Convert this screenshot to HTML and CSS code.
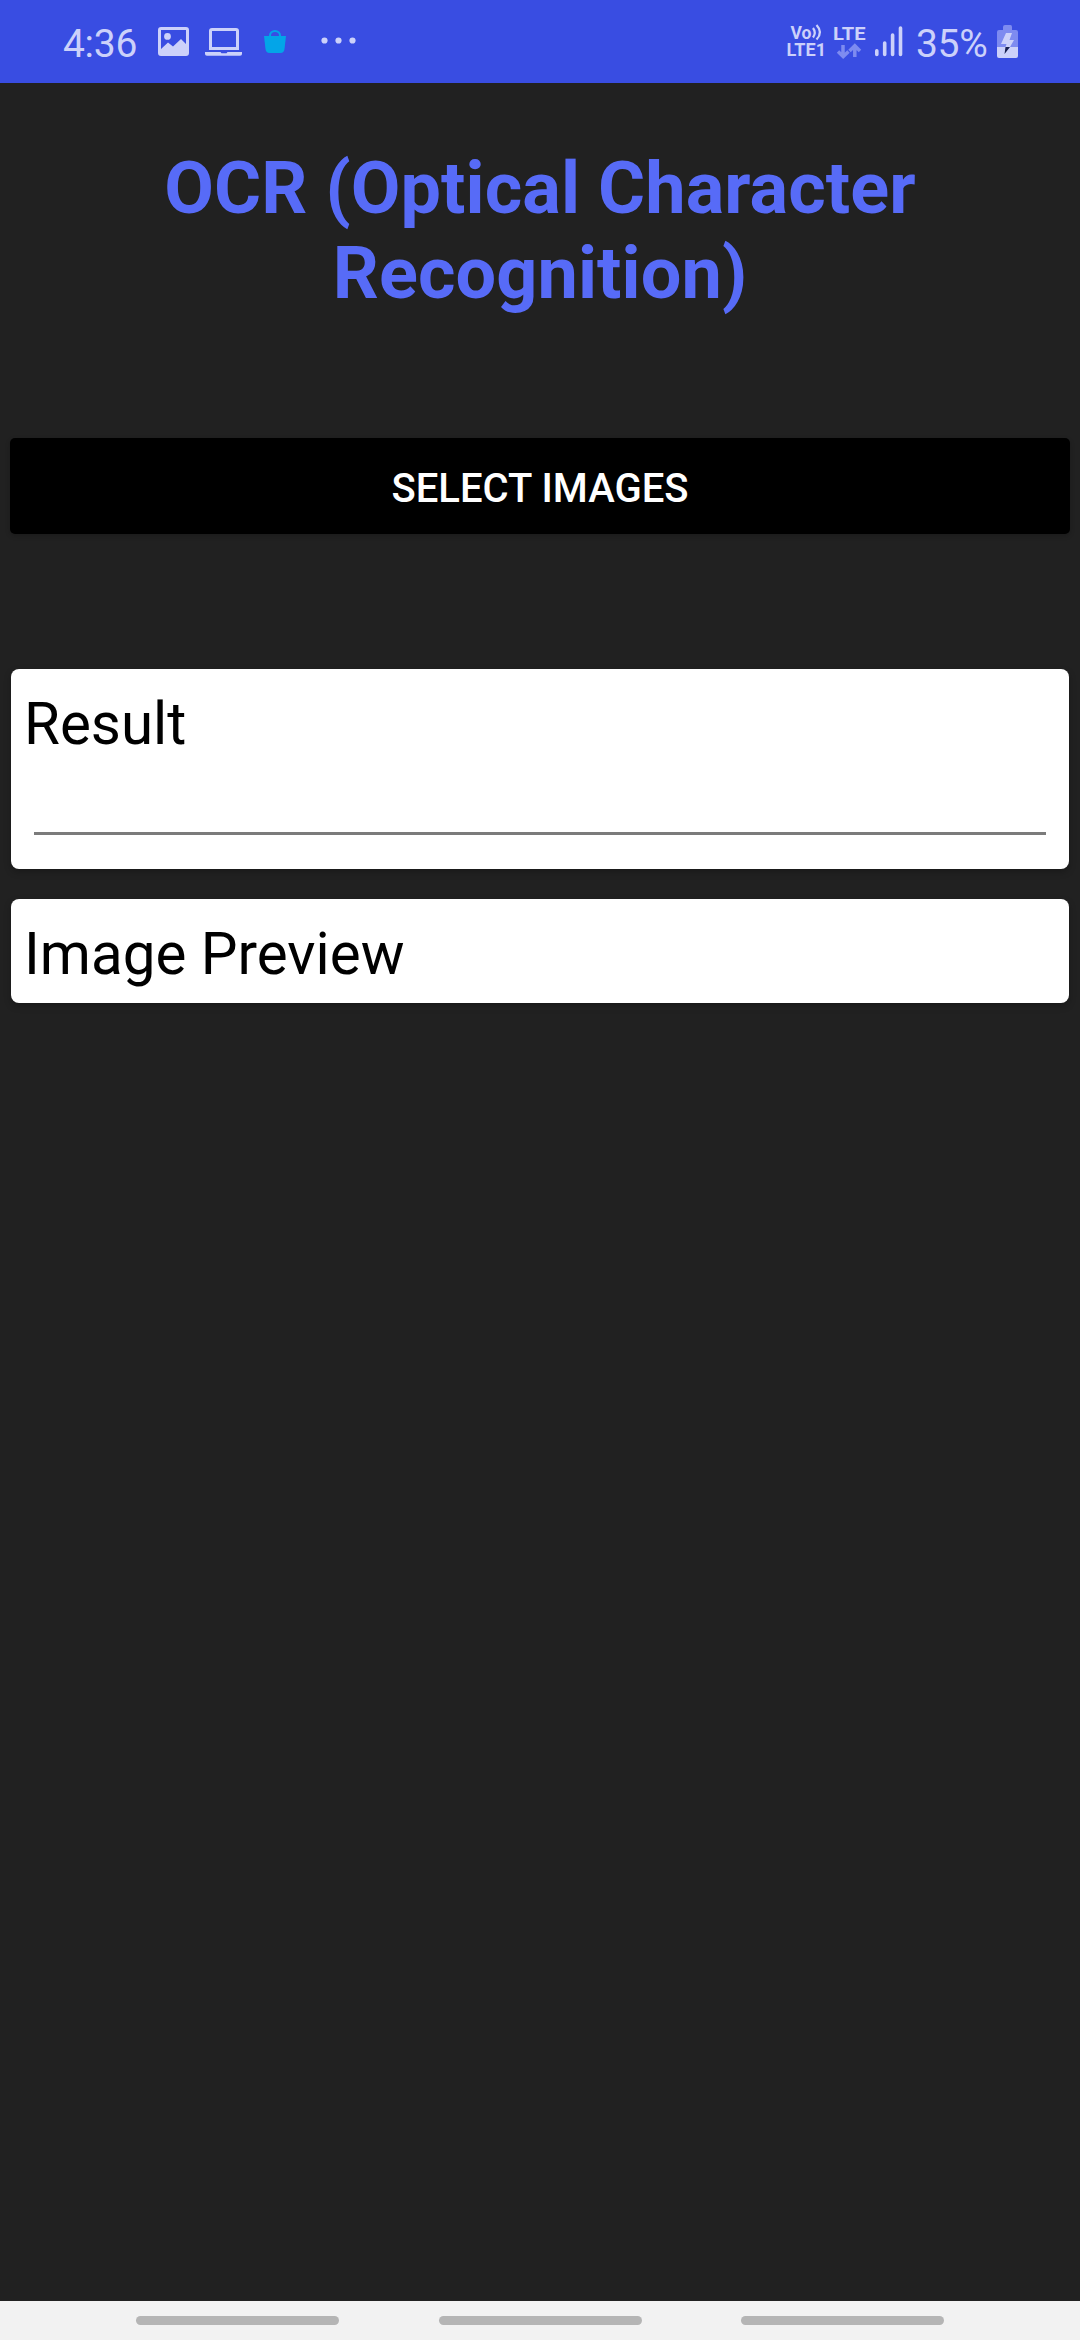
FILE: index.html
```html
<!DOCTYPE html>
<html lang="en">
<head>
<meta charset="utf-8">
<title>OCR (Optical Character Recognition)</title>
<link rel="stylesheet" href="styles.css">
</head>
<body>
<div class="screen">
  <header class="status">
    <div class="status-left">
      <span class="clock">4:36</span>
      <svg class="icon-photo" width="31" height="29" viewBox="0 0 31 29"><path fill="currentColor" fill-rule="evenodd" d="M3 0H28Q31 0 31 3V26Q31 29 28 29H3Q0 29 0 26V3Q0 0 3 0ZM3 3V22L10 15.5L15 19.5L23 12L28 17V3ZM9.5 6A3.4 3.4 0 1 1 9.5 12.8A3.4 3.4 0 1 1 9.5 6Z"/></svg>
      <svg class="icon-laptop" width="37" height="28" viewBox="0 0 37 28"><path fill="currentColor" fill-rule="evenodd" d="M7 0H31Q34 0 34 3V22H4V3Q4 0 7 0ZM7 3V19H31V3ZM0 24H15.5L16.5 25.2H21.5L22.5 24H37V26Q37 27.7 35 27.7H2Q0 27.7 0 26Z"/></svg>
      <svg class="icon-bag" width="22" height="23" viewBox="0 0 22 23"><path fill="none" stroke="#03a5e8" stroke-width="2" d="M6 8V5.5A5 4.5 0 0 1 16 5.5V8"/><path fill="#03a5e8" d="M0 6H22L20.5 19Q20 23 16.500 23H5.500Q2 23 1.500 19Z"/></svg>
      <svg class="icon-more" width="35" height="7" viewBox="0 0 35 7" fill="currentColor"><circle cx="3.500" cy="3.500" r="3.100"/><circle cx="17.500" cy="3.500" r="3.100"/><circle cx="31.500" cy="3.500" r="3.100"/></svg>
    </div>
    <div class="status-right">
      <svg class="icon-volte" width="40" height="36" viewBox="0 0 40 36">
        <g fill="currentColor" class="net-label"><text x="3.500" y="15.500" textLength="21" lengthAdjust="spacingAndGlyphs">Vo</text><text x="-.5" y="33" textLength="39.500" lengthAdjust="spacingAndGlyphs">LTE1</text></g>
        <g fill="none" stroke="currentColor" stroke-width="2.200"><path d="M26 5Q29.500 9.500 26 14.500M29.500 2Q36.500 9.500 29.500 16.500"/></g>
      </svg>
      <svg class="icon-lte" width="32" height="36" viewBox="0 0 32 36">
        <text class="net-label" fill="currentColor" x="-1" y="17" textLength="32.500" lengthAdjust="spacingAndGlyphs">LTE</text>
        <path fill="none" stroke="#7e8bf0" stroke-width="3.500" d="M9 22V33M4 28.500L9.200 33.500L14.500 28.500M20.800 34V23M15.500 28L20.800 22.800L26 28"/>
      </svg>
      <svg class="icon-signal" width="28" height="31" viewBox="0 0 28 31"><path fill="none" stroke="currentColor" stroke-width="3.600" stroke-linecap="round" d="M1.800 24.800V28.500M9.700 17V28.500M17.600 9V28.500M25.500 2V28.500"/></svg>
      <span class="battery-level">35%</span>
      <svg class="icon-battery" width="21" height="33" viewBox="0 0 21 33"><path fill="#7e8bf0" d="M6 2Q6 0 8 0H13.500Q15 0 15 2V5H19Q21 5 21 7V22H0V7Q0 5 2 5H6Z"/><path fill="currentColor" d="M0 22H21V31Q21 33 19 33H2Q0 33 0 31Z"/><path fill="currentColor" d="M9 8H15L12.500 15H17L13 22H8.500L9.500 19H4Z"/><path fill="#182052" d="M8.500 22H13L7.500 29Z"/></svg>
    </div>
  </header>
  <main class="content">
    <h1 class="title">OCR (Optical Character Recognition)</h1>
    <button class="select">SELECT IMAGES</button>
    <section class="card result">
      <h2 class="card-title">Result</h2>
      <div class="field"></div>
    </section>
    <section class="card preview">
      <h2 class="card-title">Image Preview</h2>
    </section>
  </main>
  <nav class="navbar"><span class="hint"></span><span class="hint"></span><span class="hint"></span></nav>
</div>
</body>
</html>
```
FILE: styles.css
```css
* { box-sizing: border-box; }
body {
  margin: 0;
  font-family: Roboto, "Liberation Sans", sans-serif;
  background: #212121;
}
.screen {
  width: 1080px;
  height: 2340px;
  display: flex;
  flex-direction: column;
  background: #212121;
}
.status {
  height: 83px;
  flex: none;
  display: flex;
  justify-content: space-between;
  padding: 0 62px 0 63px;
  background: #394de2;
  color: #ccd1fa;
}
.status svg { display: block; flex: none; overflow: visible; }
.status-left, .status-right { display: flex; align-items: flex-start; }
.clock, .battery-level {
  font-size: 39px;
  line-height: 46px;
  margin-top: 21px;
  letter-spacing: -0.3px;
  white-space: nowrap;
}
.clock { width: 95px; }
.battery-level { width: 81px; }
.icon-photo { margin-top: 27px; }
.icon-laptop { margin: 28px 0 0 16px; }
.icon-bag { margin: 30px 0 0 22px; }
.icon-more { margin: 37px 0 0 35px; }
.icon-volte { margin: 23px 7px 0 0; }
.icon-lte { margin: 23px 9px 0 0; }
.icon-signal { margin: 26px 13px 0 0; }
.icon-battery { margin-top: 25px; }
.net-label { font-size: 18px; font-weight: 700; }
.content {
  flex: 1;
  display: flex;
  flex-direction: column;
  padding: 63px 10px 0;
}
.title {
  margin: 0;
  padding: 0 100px;
  color: #576bf7;
  font-size: 72px;
  font-weight: 700;
  letter-spacing: 0.1px;
  line-height: 85px;
  text-align: center;
}
.select {
  height: 96px;
  margin-top: 122px;
  padding: 5px 0 0;
  border: 0;
  border-radius: 5px;
  background: #000;
  color: #fff;
  font: 500 40px/48px Roboto, sans-serif;
  box-shadow: 0 2px 5px rgba(0, 0, 0, .2);
}
.card {
  margin: 0 1px;
  padding: 20px 13px 0;
  border-radius: 8px;
  background: #fff;
  box-shadow: 0 3px 7px rgba(0, 0, 0, .25);
}
.result { height: 200px; margin-top: 135px; }
.preview { height: 104px; margin-top: 30px; }
.card-title {
  margin: 0;
  color: #000;
  font-size: 58.3px;
  font-weight: 400;
  line-height: 70px;
}
.field {
  height: 76px;
  margin: 0 10px;
  border-bottom: 3px solid #7b7b7b;
}
.navbar {
  height: 39px;
  flex: none;
  display: flex;
  justify-content: space-between;
  padding: 15px 136px 0;
  background: #f2f2f2;
}
.hint {
  width: 203px;
  height: 9px;
  border-radius: 5px;
  background: #b5b5b5;
}
```
